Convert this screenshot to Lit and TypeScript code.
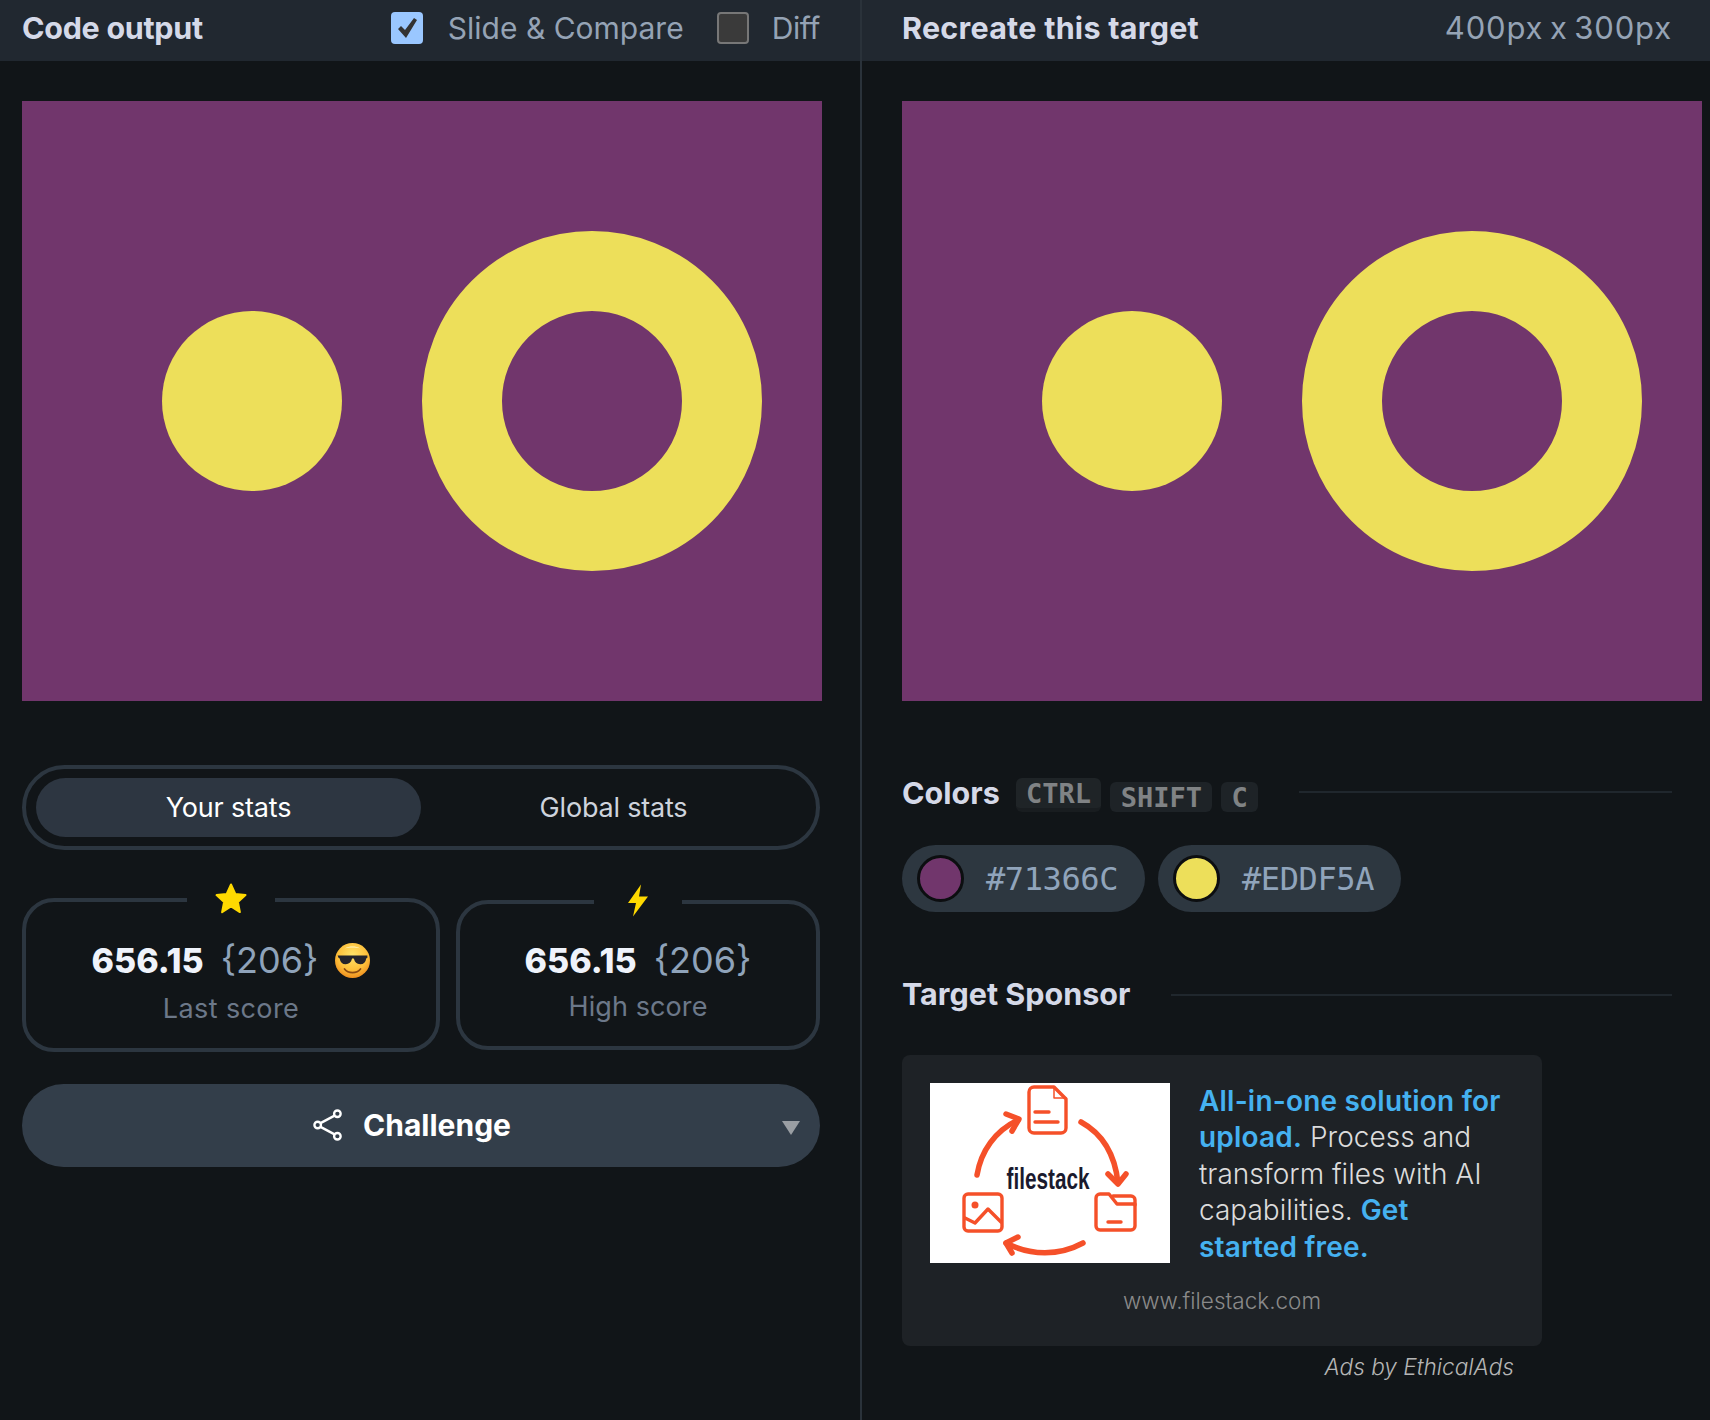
import { LitElement, html, css, svg } from 'lit';
import { customElement } from 'lit/decorators.js';

const faceIcon = html`<svg class="emoji" viewBox="0 0 35 35" aria-hidden="true">
  <defs>
    <radialGradient id="face" cx="50%" cy="35%" r="65%">
      <stop offset="0" stop-color="#ffe46a" />
      <stop offset="0.65" stop-color="#fdbf3a" />
      <stop offset="1" stop-color="#ef8f1f" />
    </radialGradient>
  </defs>
  <circle cx="17.5" cy="17.5" r="17.5" fill="url(#face)" />
  <path d="M10 5.5c4-2.6 11-2.6 15 0-4-1.2-11-1.2-15 0z" fill="#fff6c4" />
  <path d="M2.6 12.6h29.8v2.2l-1.2.6c-.5 3.8-2.5 5.8-6 5.8-3.4 0-5.4-2-6.2-5.2-.6-.9-1.5-.9-2.1 0-.8 3.2-2.8 5.2-6.2 5.2-3.5 0-5.5-2-6-5.8l-1.2-.6z" fill="#23232b" />
  <path d="M9.5 26c2 2.6 4.700 3.600 8 3.600s6-1 8-3.600" fill="none" stroke="#8a4a12" stroke-width="1.700" stroke-linecap="round" />
</svg>`;

const logo = svg`
  <g fill="none" stroke="#f55029" stroke-width="3.400" stroke-linecap="round" stroke-linejoin="round">
    <path d="M104 4h20l12 12v29a5 5 0 0 1-5 5h-27a5 5 0 0 1-5-5V9a5 5 0 0 1 5-5z" />
    <path d="M124 4v11h12" stroke-width="1.500" />
    <path d="M105 29h14M105 39h23" />
    <path d="M151 39c22 12 34 33 37 61" stroke-width="5.500" />
    <path d="M178 91l10 10 8-10" stroke-width="5.500" />
    <path d="M47 92c4-24 18-44 41-55" stroke-width="5.500" />
    <path d="M76 31l13 5-7 12" stroke-width="5.500" />
    <path d="M153 160c-24 13-52 13-77 0" stroke-width="5.500" />
    <path d="M88 154l-12 6 6 10" stroke-width="5.500" />
    <rect x="34" y="111" width="38" height="37" rx="4" />
    <path d="M35 135l10 5 13-14 13 13" />
    <path d="M170 111h9l8 10h18v22a4 4 0 0 1-4 4h-31a4 4 0 0 1-4-4v-28a4 4 0 0 1 4-4z" />
    <path d="M183 113h18a4 4 0 0 1 4 4v5" />
    <path d="M178 139h13" />
  </g>
  <circle cx="45" cy="122" r="3.500" fill="#f55029" />
  <text x="118" y="106" text-anchor="middle" textLength="83" lengthAdjust="spacingAndGlyphs" class="logo-text">filestack</text>
`;

@customElement('app-root')
export class AppRoot extends LitElement {
  static styles = css`
    :host {
      display: block;
      width: 1710px;
      height: 1420px;
      overflow: hidden;
      background: #111518;
      font-family: 'Inter', 'Liberation Sans', sans-serif;
      color: #fff;
    }

    .page {
      display: flex;
      height: 1420px;
    }

    .panel-left {
      width: 860px;
      flex: none;
    }

    .panel-right {
      flex: 1;
      border-left: 2px solid #2a323a;
    }

    .bar {
      height: 61px;
      box-sizing: border-box;
      background: #212830;
      display: flex;
      align-items: center;
      justify-content: space-between;
      padding-bottom: 6px;
    }

    .panel-left .bar {
      padding-left: 22px;
      padding-right: 40px;
    }

    .panel-right .bar {
      padding-left: 40px;
      padding-right: 38px;
    }

    .bar h2 {
      margin: 0;
      font-size: 30.5px;
      font-weight: 700;
      color: #d5d9e8;
    }

    .panel-left .bar h2 {
      letter-spacing: -0.3px;
    }

    .panel-right .bar h2 {
      letter-spacing: 0.25px;
    }

    .bar-options {
      display: flex;
      align-items: center;
      font-size: 30px;
      color: #95a3b5;
    }

    .diff {
      letter-spacing: -0.4px;
    }

    .size {
      font-size: 31px;
      letter-spacing: 0.85px;
      word-spacing: -3px;
      color: #95a3b5;
    }

    .check {
      width: 32px;
      height: 32px;
      border-radius: 4px;
      box-sizing: border-box;
      margin-right: 25px;
      display: flex;
      align-items: center;
      justify-content: center;
    }

    .check.on {
      background: #9ac7ff;
    }

    .check.off {
      background: #3a3a3a;
      border: 2px solid #777;
      margin-left: 33px;
      margin-right: 23px;
    }

    .check svg {
      width: 24px;
      height: 24px;
    }

    .canvas {
      position: relative;
      width: 800px;
      height: 600px;
      margin: 40px 0 0 22px;
      background: #71366c;
      overflow: hidden;
    }

    .panel-right .canvas {
      margin-left: 40px;
    }

    .dot {
      position: absolute;
      left: 140px;
      top: 210px;
      width: 180px;
      height: 180px;
      border-radius: 50%;
      background: #eddf5a;
    }

    .ring {
      position: absolute;
      left: 400px;
      top: 130px;
      width: 180px;
      height: 180px;
      border: 80px solid #eddf5a;
      border-radius: 50%;
    }

    .stats {
      margin: 64px 40px 0 22px;
    }

    .tabs {
      display: flex;
      height: 85px;
      box-sizing: border-box;
      padding: 9px 10px;
      border: 4px solid #2c3640;
      border-radius: 43px;
    }

    .tab {
      flex: 1;
      border-radius: 30px;
      display: flex;
      align-items: center;
      justify-content: center;
      font-size: 27px;
      letter-spacing: -0.2px;
      color: #ced3dc;
    }

    .tab.active {
      background: #2d3641;
      color: #fff;
    }

    .scores {
      display: flex;
      align-items: center;
      gap: 16px;
      margin-top: 48px;
    }

    .score {
      position: relative;
      box-sizing: border-box;
      border: 4px solid #2c3640;
      border-radius: 32px;
      display: flex;
      flex-direction: column;
      align-items: center;
    }

    .score.last {
      width: 418px;
      height: 154px;
      padding-top: 36px;
    }

    .score.high {
      flex: 1;
      height: 150px;
      padding-top: 34px;
    }

    .badge {
      position: absolute;
      top: -22px;
      left: 50%;
      transform: translateX(-50%);
      width: 88px;
      height: 36px;
      background: #111518;
      display: flex;
      align-items: center;
      justify-content: center;
    }

    .star {
      width: 32px;
      height: 31px;
    }

    .bolt {
      width: 24px;
      height: 33px;
    }

    .value {
      display: flex;
      align-items: center;
      gap: 17px;
      height: 44px;
    }

    .value b {
      font-size: 34px;
      font-weight: 800;
      color: #eff3fb;
    }

    .value span {
      font-size: 36px;
      color: #8fa3ba;
    }

    .emoji {
      width: 35px;
      height: 35px;
    }

    .label {
      font-size: 27px;
      letter-spacing: 0.1px;
      color: #6c7889;
    }

    .last .label {
      margin-top: 10px;
      letter-spacing: 0.4px;
    }

    .high .label {
      margin-top: 8px;
    }

    .challenge {
      position: relative;
      height: 83px;
      box-sizing: border-box;
      margin-top: 32px;
      padding: 0 18px 2px 0;
      border-radius: 42px;
      background: #333e4a;
      display: flex;
      align-items: center;
      justify-content: center;
      gap: 20px;
      font-size: 30px;
      font-weight: 700;
    }

    .challenge .share {
      width: 30px;
      height: 34px;
    }

    .caret {
      position: absolute;
      right: 20px;
      top: 37px;
      width: 0;
      height: 0;
      border-left: 9px solid transparent;
      border-right: 9px solid transparent;
      border-top: 14px solid #9a9ea3;
    }

    .section {
      display: flex;
      align-items: center;
      height: 34px;
      margin: 0 38px 0 40px;
    }

    .section h3 {
      margin: 0 0 4px;
      font-size: 30.5px;
      font-weight: 700;
      color: #d5d9e8;
    }

    .section i {
      flex: 1;
      height: 2px;
      background: #20272d;
    }

    .colors-head {
      margin-top: 77px;
    }

    .colors-head h3 {
      margin: 0 16px 6px 0;
    }

    .colors-head i {
      margin-left: 41px;
      align-self: flex-start;
      margin-top: 13px;
    }

    .keys {
      display: flex;
      gap: 9px;
      align-items: flex-end;
      height: 34px;
    }

    kbd {
      box-sizing: border-box;
      height: 30px;
      padding: 0 10.3px;
      border-radius: 6px;
      background: #1e2327;
      font: 700 27px/32px 'DejaVu Sans Mono', monospace;
      color: #808385;
    }

    kbd.pressed {
      height: 34px;
      line-height: 31px;
      background: #1f2427;
      border-bottom: 4px solid #191d20;
    }

    .swatches {
      display: flex;
      gap: 13px;
      margin: 33px 0 0 40px;
    }

    .swatch {
      width: 243px;
      height: 67px;
      box-sizing: border-box;
      padding-left: 15px;
      border-radius: 34px;
      background: #2d3740;
      display: flex;
      align-items: center;
      gap: 22px;
      font: 400 32px 'DejaVu Sans Mono', monospace;
      letter-spacing: -0.4px;
      color: #90a4bb;
    }

    .swatch span {
      width: 47px;
      height: 47px;
      box-sizing: border-box;
      border: 3px solid #0c0e10;
      border-radius: 50%;
    }

    .sponsor-head {
      margin-top: 66px;
    }

    .sponsor-head i {
      margin-left: 41px;
    }

    .ad {
      width: 640px;
      height: 291px;
      box-sizing: border-box;
      margin: 43px 0 0 40px;
      padding: 28px 28px 0;
      border-radius: 8px;
      background: #1e2226;
    }

    .ad-main {
      display: flex;
      gap: 29px;
    }

    .ad-logo {
      flex: none;
      width: 240px;
      height: 180px;
      background: #fff;
    }

    .logo-text {
      font: 700 29px 'Liberation Sans', sans-serif;
      fill: #1a1a2e;
    }

    .ad-copy {
      margin: 0;
      font-size: 28px;
      font-weight: 300;
      line-height: 1.3;
      color: #dcdcdc;
      white-space: nowrap;
    }

    .ad-copy b {
      font-weight: 600;
      letter-spacing: 0.2px;
      color: #45b1f0;
    }

    .ad-url {
      margin-top: 22px;
      text-align: center;
      font-size: 22.5px;
      font-weight: 300;
      color: #8a8a8a;
    }

    .ad-by {
      width: 612px;
      margin: 7px 0 0 40px;
      text-align: right;
      font-size: 22.6px;
      font-style: italic;
      font-weight: 300;
      color: #b5b5b5;
    }
  `;

  private canvas() {
    return html`<div class="canvas"><div class="dot"></div><div class="ring"></div></div>`;
  }

  render() {
    return html`
      <div class="page">
        <section class="panel-left">
          <div class="bar">
            <h2>Code output</h2>
            <div class="bar-options">
              <div class="check on">
                <svg viewBox="0 0 24 24"><path d="M3 13l3-3 4 4L19 2l3 2-11 18z" fill="#333" /></svg>
              </div>
              Slide &amp; Compare
              <div class="check off"></div>
              <span class="diff">Diff</span>
            </div>
          </div>
          ${this.canvas()}
          <div class="stats">
            <div class="tabs">
              <div class="tab active">Your stats</div>
              <div class="tab">Global stats</div>
            </div>
            <div class="scores">
              <div class="score last">
                <div class="badge">
                  <svg class="star" viewBox="0 0 32 31">
                    <path d="M16 1.500l4.300 9.400 10.200 1.200-7.600 6.900 2 10.100L16 23.500l-8.900 5.600 2-10.100-7.600-6.900 10.200-1.200z" fill="#ffd900" stroke="#ffd900" stroke-width="2" stroke-linejoin="round" />
                  </svg>
                </div>
                <div class="value"><b>656.15</b><span>{206}</span>${faceIcon}</div>
                <div class="label">Last score</div>
              </div>
              <div class="score high">
                <div class="badge">
                  <svg class="bolt" viewBox="0 0 24 33">
                    <path d="M15 0.500L2 19h8L7 32.500 22 12.500h-9z" fill="#ffd900" />
                  </svg>
                </div>
                <div class="value"><b>656.15</b><span>{206}</span></div>
                <div class="label">High score</div>
              </div>
            </div>
            <div class="challenge">
              <svg class="share" viewBox="0 0 32 34" fill="none" stroke="#fff" stroke-width="2.500">
                <circle cx="5" cy="17" r="3.500" />
                <circle cx="26" cy="5" r="3.500" />
                <circle cx="26" cy="29" r="3.500" />
                <path d="M8 15L23 7M8 19l15 8" />
              </svg>
              Challenge
              <div class="caret"></div>
            </div>
          </div>
        </section>
        <section class="panel-right">
          <div class="bar">
            <h2>Recreate this target</h2>
            <div class="size">400px x 300px</div>
          </div>
          ${this.canvas()}
          <div class="section colors-head">
            <h3>Colors</h3>
            <div class="keys">
              <kbd class="pressed">CTRL</kbd><kbd>SHIFT</kbd><kbd>C</kbd>
            </div>
            <i></i>
          </div>
          <div class="swatches">
            <div class="swatch"><span style="background:#71366c"></span>#71366C</div>
            <div class="swatch"><span style="background:#eddf5a"></span>#EDDF5A</div>
          </div>
          <div class="section sponsor-head">
            <h3>Target Sponsor</h3>
            <i></i>
          </div>
          <div class="ad">
            <div class="ad-main">
              <svg class="ad-logo" viewBox="0 0 240 180">${logo}</svg>
              <p class="ad-copy">
                <b>All-in-one solution for</b><br />
                <b>upload.</b> Process and<br />
                transform files with AI<br />
                capabilities. <b>Get</b><br />
                <b>started free.</b>
              </p>
            </div>
            <div class="ad-url">www.filestack.com</div>
          </div>
          <div class="ad-by">Ads by EthicalAds</div>
        </section>
      </div>
    `;
  }
}
